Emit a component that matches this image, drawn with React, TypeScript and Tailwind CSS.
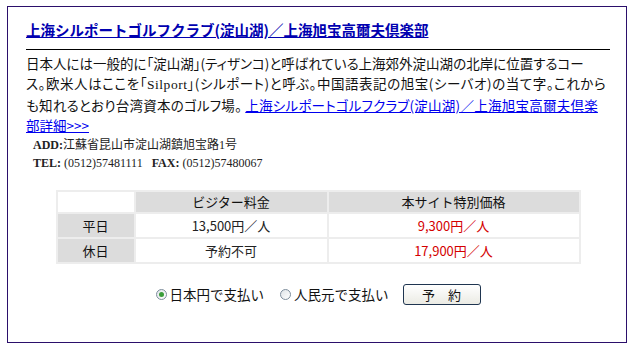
import React from 'react'

const jp = { fontFamily: '"Noto Sans CJK JP", "Noto Sans", sans-serif' }
const serif = { fontFamily: '"Liberation Serif", "Noto Sans CJK JP", serif' }
const palt = { fontFeatureSettings: '"palt"' }

const Radio = ({ checked }: { checked?: boolean }) => (
  <span className="inline-flex items-center justify-center w-[11px] h-[11px] rounded-full border border-[#7d8d9c] bg-gradient-to-br from-[#dfe4e8] to-white">
    {checked && <span className="w-[5px] h-[5px] rounded-full bg-[#3a9d3a]" />}
  </span>
)

const App: React.FC = () => {
  const rows = [
    { label: '平日', visitor: '13,500円／人', special: '9,300円／人' },
    { label: '休日', visitor: '予約不可', special: '17,900円／人' },
  ]

  return (
    <div className="w-[638px] h-[348px] bg-white pt-[6px] pl-[7px]" style={jp}>
      <div className="w-[620px] h-[337px] border border-[#2b0f6b] pl-[18px] pr-[16px] pt-[13px]">
        {/* Title */}
        <a href="#" className="block text-[14.5px] leading-[20px] font-bold text-[#0000b0] underline whitespace-nowrap">
          上海シルポートゴルフクラブ(淀山湖)／上海旭宝高爾夫倶楽部
        </a>
        <div className="mt-[9px] h-px bg-black" />

        {/* Description */}
        <div className="mt-[3px] text-[13.5px] leading-[20px] text-[#111] whitespace-nowrap" style={palt}>
          <div>日本人には一般的に「淀山湖」(ティザンコ)と呼ばれている上海郊外淀山湖の北岸に位置するコー</div>
          <div className="tracking-[0.55px]">
            ス。欧米人はここを「<span style={serif}>Silport</span>」(シルポート)と呼ぶ。中国語表記の旭宝(シーバオ)の当て字。これから
          </div>
          <div className="tracking-[0.25px]">
            も知れるとおり台湾資本のゴルフ場。 <a href="#" className="text-[#0000ee] underline">上海シルポートゴルフクラブ(淀山湖)／上海旭宝高爾夫倶楽</a>
          </div>
          <div>
            <a href="#" className="text-[#0000ee] underline">部詳細&gt;&gt;&gt;</a>
          </div>
        </div>

        {/* Address */}
        <div className="mt-[1px] pl-[7px] text-[12px] leading-[18px] text-[#222]" style={serif}>
          <div><b>ADD:</b>江蘇省昆山市淀山湖鎮旭宝路1号</div>
          <div>
            <b>TEL:</b> (0512)57481111&nbsp;&nbsp;&nbsp;<b>FAX:</b> (0512)57480067
          </div>
        </div>

        {/* Price table */}
        <table className="mt-[18px] mx-auto w-[525px] table-fixed border-separate border-spacing-[2px] bg-[#ededed] text-[13px] text-center">
          <colgroup>
            <col className="w-[76px]" />
            <col className="w-[191px]" />
            <col />
          </colgroup>
          <thead>
            <tr className="h-[20px]">
              <th className="bg-white font-normal" />
              <th className="bg-[#dcdcdc] font-normal text-[#111]">ビジター料金</th>
              <th className="bg-[#dcdcdc] font-normal text-[#111]">本サイト特別価格</th>
            </tr>
          </thead>
          <tbody>
            {rows.map((r) => (
              <tr key={r.label} className="h-[23px]">
                <td className="bg-[#dcdcdc] text-[#111]">{r.label}</td>
                <td className="bg-white text-[#222]">{r.visitor}</td>
                <td className="bg-white text-[#d40000]">{r.special}</td>
              </tr>
            ))}
          </tbody>
        </table>

        {/* Payment */}
        <div className="mt-[20px] flex items-center justify-center text-[13.5px] text-[#111]">
          <label className="flex items-center gap-[3px]">
            <Radio checked />
            <span>日本円で支払い</span>
          </label>
          <label className="ml-[16px] flex items-center gap-[3px]">
            <Radio />
            <span>人民元で支払い</span>
          </label>
          <button className="ml-[14px] w-[78px] h-[21px] rounded-[3px] border border-[#1f3550] bg-gradient-to-b from-white to-[#ebebe4] text-[13px] leading-none text-[#111]">
            予　約
          </button>
        </div>
      </div>
    </div>
  )
}

export default App
